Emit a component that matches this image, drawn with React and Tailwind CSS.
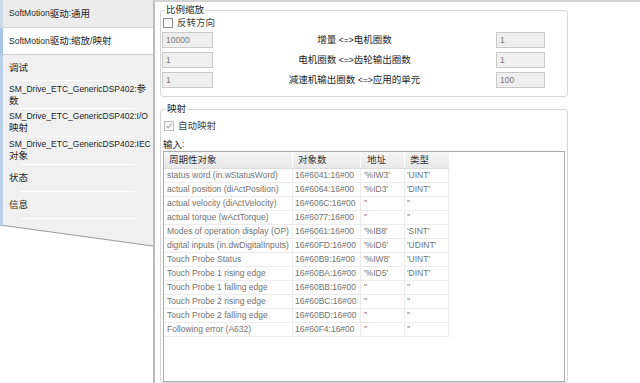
import React from "react";

const CJK = /([\u3400-\u9fff\uff00-\uffef]+)/;

function Mix({ text }) {
  return text.split(CJK).map((part, i) =>
    CJK.test(part) ? (
      <span key={i} className="text-[9.5px]">
        {part}
      </span>
    ) : (
      part
    ),
  );
}

const navItems = [
  { lines: ["调试"], h: "h-[26px]" },
  { lines: ["SM_Drive_ETC_GenericDSP402:参", "数"], h: "h-[28px]" },
  { lines: ["SM_Drive_ETC_GenericDSP402:I/O", "映射"], h: "h-[28px]" },
  { lines: ["SM_Drive_ETC_GenericDSP402:IEC", "对象"], h: "h-[28px]" },
  { lines: ["状态"], h: "h-[27px]" },
  { lines: ["信息"], h: "h-[27px]" },
];

const rows = [
  ["status word (in.wStatusWord)", "16#6041:16#00", "'%IW3'", "'UINT'"],
  ["actual position (diActPosition)", "16#6064:16#00", "'%ID3'", "'DINT'"],
  ["actual velocity (diActVelocity)", "16#606C:16#00", "''", "''"],
  ["actual torque (wActTorque)", "16#6077:16#00", "''", "''"],
  ["Modes of operation display (OP)", "16#6061:16#00", "'%IB8'", "'SINT'"],
  ["digital inputs (in.dwDigitalInputs)", "16#60FD:16#00", "'%ID6'", "'UDINT'"],
  ["Touch Probe Status", "16#60B9:16#00", "'%IW8'", "'UINT'"],
  ["Touch Probe 1 rising edge", "16#60BA:16#00", "'%ID5'", "'DINT'"],
  ["Touch Probe 1 falling edge", "16#60BB:16#00", "''", "''"],
  ["Touch Probe 2 rising edge", "16#60BC:16#00", "''", "''"],
  ["Touch Probe 2 falling edge", "16#60BD:16#00", "''", "''"],
  ["Following error (A632)", "16#60F4:16#00", "''", "''"],
];

function CheckBox({ checked, disabled }) {
  return (
    <div
      className={`w-[10px] h-[10px] border bg-gradient-to-b from-[#f4f4f4] to-white ${
        disabled ? "border-[#bcbcbc]" : "border-[#8e8f8f]"
      }`}
    >
      {checked && (
        <svg width="8" height="8" viewBox="0 0 8 8">
          <path d="M1.5 4.2 L3.2 6 L6.6 1.6" fill="none" stroke="#a8a8a8" strokeWidth="1.1" />
        </svg>
      )}
    </div>
  );
}

function Field({ value, w }) {
  return (
    <div
      className={`${w} h-[16px] border border-[#c9c9c9] bg-[#efefef] text-[8.5px] text-[#7a7a7a] pl-[3px] flex items-center`}
    >
      {value}
    </div>
  );
}

export default function App() {
  const scale = [
    ["10000", "增量 <=>电机圈数", "1"],
    ["1", "电机圈数 <=>齿轮输出圈数", "1"],
    ["1", "减速机输出圈数 <=>应用的单元", "100"],
  ];

  return (
    <div className="w-[640px] h-[383px] overflow-hidden bg-white flex font-['Liberation_Sans','Noto_Sans_CJK_SC',sans-serif] text-[8.5px] text-[#1e1e1e] leading-none">
      {/* tab list */}
      <div className="w-[153px] shrink-0 flex flex-col">
        <div className="h-[28px] bg-[#ececec] border-b border-[#cfcfcf] border-l-[3px] border-l-[#c9d9ea] pl-[6px] flex items-center">
          <Mix text="SoftMotion驱动:通用" />
        </div>
        <div className="h-[27px] bg-white border-b border-[#cfcfcf] border-l-[3px] border-l-[#a9c6e6] pl-[6px] flex items-center">
          <Mix text="SoftMotion驱动:缩放/映射" />
        </div>
        <div className="bg-[#f0f0f0] border-l-[3px] border-l-[#b9d0e9] flex flex-col">
          {navItems.map((item, i) => (
            <div key={i} className={`${item.h} flex flex-col`}>
              <div className="flex-1 flex flex-col justify-center pl-[6px] leading-[11px]">
                {item.lines.map((line) => (
                  <div key={line}>
                    <Mix text={line} />
                  </div>
                ))}
              </div>
              <div className="h-px bg-white ml-[17px] mr-[18px]" />
            </div>
          ))}
          <div className="h-[4px]" />
        </div>
        <svg width="153" height="24" className="block">
          <polygon points="0,0 153,0 153,23 0,2" fill="#f0f0f0" />
          <line x1="0" y1="2" x2="153" y2="23" stroke="#9a9a9a" strokeWidth="1" />
          <line x1="1.5" y1="0" x2="1.5" y2="2" stroke="#b9d0e9" strokeWidth="3" />
        </svg>
      </div>

      {/* content */}
      <div className="flex-1 border-l-2 border-l-[#bcbcbc] border-t-2 border-t-[#d4d4d4] flex flex-col pl-[5px]">
        <fieldset className="mt-[2px] w-[408px] border border-[#d6d6d6] rounded-[3px] pl-[1px] pr-[22px] pb-[8px]">
          <legend className="ml-[3px] px-[1px] leading-[12px]">
            <Mix text="比例缩放" />
          </legend>
          <div className="flex items-center gap-[4px] ml-[1px] mt-[1px] h-[11px]">
            <CheckBox />
            <span className="text-[#444]">
              <Mix text="反转方向" />
            </span>
          </div>
          <div className="flex flex-col gap-[4px] mt-[4px]">
            {scale.map(([a, label, b]) => (
              <div key={label} className="flex items-center">
                <Field value={a} w="w-[51px]" />
                <div className="flex-1 text-center">
                  <Mix text={label} />
                </div>
                <Field value={b} w="w-[49px]" />
              </div>
            ))}
          </div>
        </fieldset>

        <fieldset className="mt-[6px] w-[408px] flex-1 min-h-0 border border-[#d6d6d6] rounded-[3px] px-[2px] flex flex-col">
          <legend className="ml-[3px] px-[1px] leading-[12px]">
            <Mix text="映射" />
          </legend>
          <div className="flex items-center gap-[4px] ml-[1px] mt-[5px] h-[11px]">
            <CheckBox checked disabled />
            <span className="text-[#444]">
              <Mix text="自动映射" />
            </span>
          </div>
          <div className="mt-[8px] h-[11px] flex items-center">
            <Mix text="输入:" />
          </div>
          <div className="mt-[1px] flex-1 border border-[#ababab] bg-white">
            <div className="flex h-[17px] w-[285px] bg-gradient-to-b from-[#f5f5f5] to-[#e8e8e8] border-b border-[#dcdcdc] text-[#333]">
              <div className="w-[129px] border-r border-white pl-[5px] flex items-center">
                <Mix text="周期性对象" />
              </div>
              <div className="w-[68px] border-r border-white pl-[5px] flex items-center">
                <Mix text="对象数" />
              </div>
              <div className="w-[44px] border-r border-white pl-[6px] flex items-center">
                <Mix text="地址" />
              </div>
              <div className="w-[44px] pl-[5px] flex items-center">
                <Mix text="类型" />
              </div>
            </div>
            {rows.map((r) => (
              <div key={r[0]} className="flex h-[14px] w-[285px] border-b border-[#ececec] text-[#727272]">
                <div className="w-[129px] border-r border-[#ececec] pl-[3px] flex items-center whitespace-nowrap overflow-hidden">
                  {r[0]}
                </div>
                <div className="w-[68px] border-r border-[#ececec] pl-[2px] flex items-center whitespace-nowrap">
                  {r[1]}
                </div>
                <div className="w-[44px] border-r border-[#ececec] pl-[3px] flex items-center">
                  {r[2]}
                </div>
                <div className="w-[44px] border-r border-[#ececec] pl-[2px] flex items-center">
                  {r[3]}
                </div>
              </div>
            ))}
          </div>
        </fieldset>
      </div>
    </div>
  );
}
